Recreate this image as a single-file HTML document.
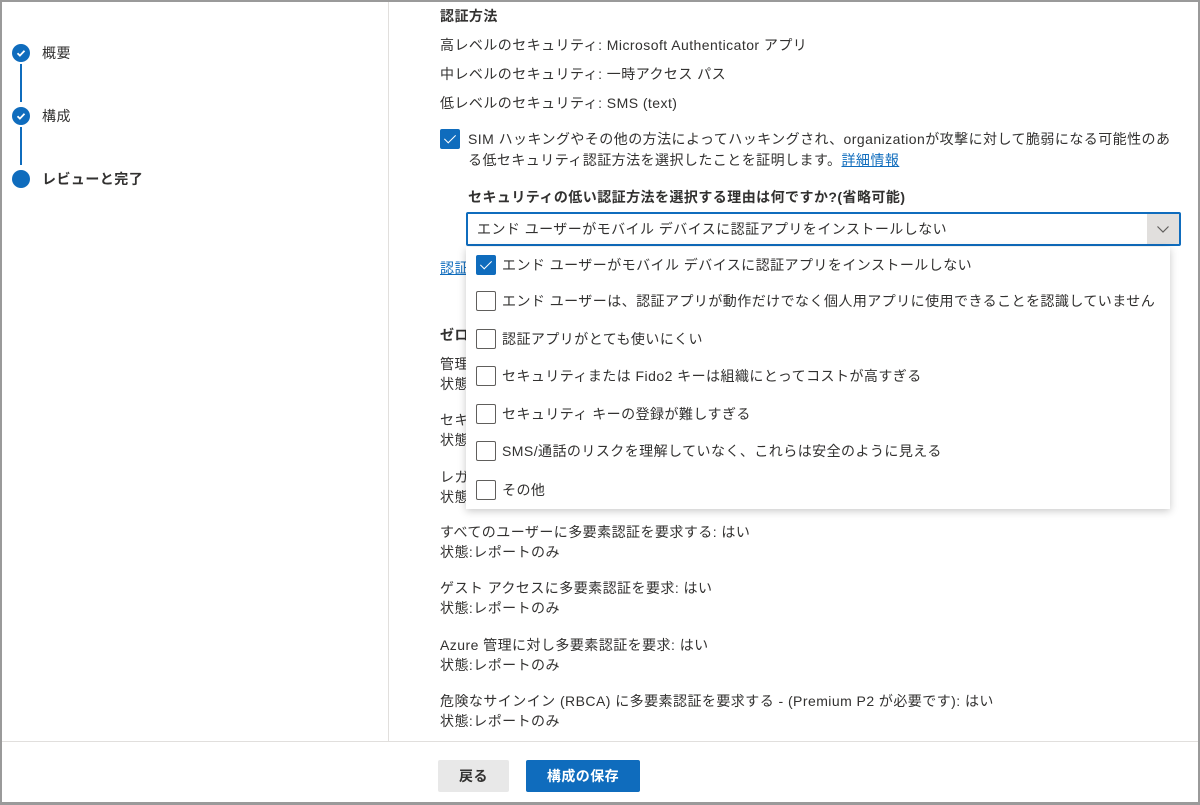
<!DOCTYPE html>
<html><head><meta charset="utf-8"><style>
*{margin:0;padding:0;box-sizing:border-box}
body{width:1200px;height:805px;background:#fff;font-family:"Liberation Sans","Noto Sans CJK JP",sans-serif;color:#323130;font-size:14px;position:relative;overflow:hidden;letter-spacing:0.45px}
.frame{position:absolute;left:0;top:0;width:1200px;height:805px;border:2px solid #9a9a9a;border-bottom-width:3px}
.a{position:absolute;white-space:nowrap;line-height:20px}
.b{font-weight:bold}
.cb{position:absolute;width:20px;height:20px;border:1px solid #605e5c;border-radius:2px;background:#fff}
.cb.on{background:#0f6cbd;border-color:#0f6cbd}
.cb.on::after{content:"";position:absolute;left:6px;top:2px;width:5px;height:10px;border:solid #fff;border-width:0 1.6px 1.6px 0;transform:rotate(45deg)}
.dot{position:absolute;left:12px;width:18px;height:18px;border-radius:50%;background:#0f6cbd}
.dot svg{position:absolute;left:3px;top:3px}
a{color:#0f6cbd}
</style></head><body>
<div class="dot" style="top:44px"><svg width="12" height="12"><path d="M2.5 6.2l2.4 2.4 4.6-4.8" stroke="#fff" stroke-width="1.8" fill="none"/></svg></div>
<div style="position:absolute;left:20px;top:64px;width:2px;height:38px;background:#0f6cbd"></div>
<div class="dot" style="top:107px"><svg width="12" height="12"><path d="M2.5 6.2l2.4 2.4 4.6-4.8" stroke="#fff" stroke-width="1.8" fill="none"/></svg></div>
<div style="position:absolute;left:20px;top:127px;width:2px;height:38px;background:#0f6cbd"></div>
<div class="dot" style="top:170px"></div>
<div class="a" style="left:42px;top:43px">概要</div>
<div class="a" style="left:42px;top:106px">構成</div>
<div class="a b" style="left:42px;top:169px">レビューと完了</div>
<div style="position:absolute;left:388px;top:0;width:1px;height:741px;background:#e1dfdd"></div>

<div class="a b" style="left:440px;top:6px">認証方法</div>
<div class="a" style="left:440px;top:35px">高レベルのセキュリティ: Microsoft Authenticator アプリ</div>
<div class="a" style="left:440px;top:64px">中レベルのセキュリティ: 一時アクセス パス</div>
<div class="a" style="left:440px;top:93px">低レベルのセキュリティ: SMS (text)</div>
<div class="cb on" style="left:440px;top:129px"></div>
<div class="a" style="left:468px;top:129px;line-height:21px">SIM ハッキングやその他の方法によってハッキングされ、organizationが攻撃に対して脆弱になる可能性のあ<br>る低セキュリティ認証方法を選択したことを証明します。<a href="#">詳細情報</a></div>
<div class="a b" style="left:468px;top:187px">セキュリティの低い認証方法を選択する理由は何ですか?(省略可能)</div>
<div style="position:absolute;left:466px;top:212px;width:715px;height:34px;border:2px solid #0f6cbd;border-radius:2px;background:#fff"></div>
<div class="a" style="left:477px;top:219px">エンド ユーザーがモバイル デバイスに認証アプリをインストールしない</div>
<div style="position:absolute;left:1147px;top:214px;width:32px;height:30px;background:#e1dfdd"></div>
<svg style="position:absolute;left:1156px;top:222px" width="14" height="14"><path d="M1.5 4.5l5.5 5.5 5.5-5.5" stroke="#605e5c" stroke-width="1.2" fill="none"/></svg>
<div class="a" style="left:440px;top:258px"><a href="#">認証</a></div>
<div class="a b" style="left:440px;top:325px">ゼロ</div>
<div class="a" style="left:440px;top:354px;line-height:20px">管理<br>状態</div>
<div class="a" style="left:440px;top:410px;line-height:20px">セキ<br>状態</div>
<div class="a" style="left:440px;top:467px;line-height:20px">レガ<br>状態</div>

<div style="position:absolute;left:466px;top:247px;width:704px;height:262px;background:#fff;box-shadow:0 2px 8px rgba(0,0,0,.22)"></div>
<div class="cb on" style="left:476px;top:255px"></div><div class="a" style="left:502px;top:255px">エンド ユーザーがモバイル デバイスに認証アプリをインストールしない</div>
<div class="cb" style="left:476px;top:291px"></div><div class="a" style="left:502px;top:291px">エンド ユーザーは、認証アプリが動作だけでなく個人用アプリに使用できることを認識していません</div>
<div class="cb" style="left:476px;top:329px"></div><div class="a" style="left:502px;top:329px">認証アプリがとても使いにくい</div>
<div class="cb" style="left:476px;top:366px"></div><div class="a" style="left:502px;top:366px">セキュリティまたは Fido2 キーは組織にとってコストが高すぎる</div>
<div class="cb" style="left:476px;top:404px"></div><div class="a" style="left:502px;top:404px">セキュリティ キーの登録が難しすぎる</div>
<div class="cb" style="left:476px;top:441px"></div><div class="a" style="left:502px;top:441px">SMS/通話のリスクを理解していなく、これらは安全のように見える</div>
<div class="cb" style="left:476px;top:480px"></div><div class="a" style="left:502px;top:480px">その他</div>

<div class="a" style="left:440px;top:522px">すべてのユーザーに多要素認証を要求する: はい<br>状態:レポートのみ</div>
<div class="a" style="left:440px;top:578px">ゲスト アクセスに多要素認証を要求: はい<br>状態:レポートのみ</div>
<div class="a" style="left:440px;top:635px">Azure 管理に対し多要素認証を要求: はい<br>状態:レポートのみ</div>
<div class="a" style="left:440px;top:691px">危険なサインイン (RBCA) に多要素認証を要求する - (Premium P2 が必要です): はい<br>状態:レポートのみ</div>

<div style="position:absolute;left:0;top:741px;width:1200px;height:1px;background:#e1dfdd"></div>
<div style="position:absolute;left:438px;top:760px;width:71px;height:32px;background:#e8e8e8;border-radius:2px;font-weight:bold;text-align:center;line-height:32px">戻る</div>
<div style="position:absolute;left:526px;top:760px;width:114px;height:32px;background:#0f6cbd;color:#fff;border-radius:2px;font-weight:bold;text-align:center;line-height:32px">構成の保存</div>
<div class="frame"></div>
</body></html>
